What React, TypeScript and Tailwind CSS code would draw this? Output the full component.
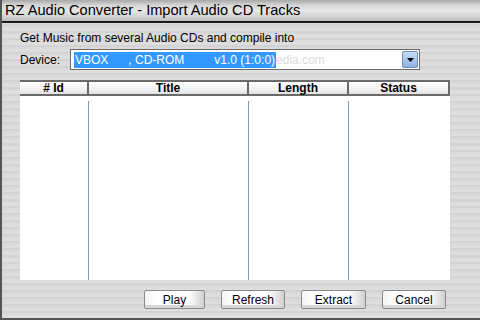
export default function App() {
  const cols = [
    { name: '# Id', w: 'w-[69px]' },
    { name: 'Title', w: 'w-[160px]' },
    { name: 'Length', w: 'w-[100px]' },
    { name: 'Status', w: 'flex-1' },
  ];
  const buttons = [
    { label: 'Play', w: 'w-[61px]' },
    { label: 'Refresh', w: 'w-[64px]' },
    { label: 'Extract', w: 'w-[65px]' },
    { label: 'Cancel', w: 'w-[64px]' },
  ];

  return (
    <div className="w-[480px] h-[320px] flex flex-col overflow-hidden border-l-2 border-b-2 border-[#555555] bg-[repeating-linear-gradient(180deg,#dedede_0px,#dedede_3px,#d3d3d3_3px,#d3d3d3_5px,#dadada_5px,#dadada_7px)] font-['Liberation_Sans',Arial,sans-serif]">
      {/* Title bar */}
      <div className="h-[23px] shrink-0 flex items-center pl-[3px] border-b-2 border-[#1a1a1a] bg-[linear-gradient(180deg,#a8a8a8_0%,#d6d6d6_25%,#e6e6e6_50%,#d2d2d2_80%,#bdbdbd_100%)]">
        <span className="text-[14.6px] leading-none text-black">RZ Audio Converter - Import Audio CD Tracks</span>
      </div>

      <div className="flex-1 flex flex-col pl-[18px] pr-[28px]">
        <div className="mt-[7px] text-[12px] leading-[16px] text-black">Get Music from several Audio CDs and compile into</div>

        <div className="mt-[3px] flex items-center">
          <span className="w-[50px] text-[12px] text-black">Device:</span>
          <div className="w-[350px] h-[21px] border border-[#6c6c6c] bg-white flex items-center pl-[3px] pr-[1px]">
            <div className="h-[16px] shrink-0 bg-[#3399ff] text-white text-[12px] leading-[16px] whitespace-pre pl-[1px] pr-[1px]">
              {'VBOX      , CD-ROM         v1.0 (1:0:0)'}
            </div>
            <span className="text-[12px] leading-[16px] text-[#dadada]">edia.com</span>
            <div className="ml-auto w-[16px] h-[17px] rounded-[2px] border border-[#6d8fc0] bg-[linear-gradient(180deg,#c9dcf6_0%,#a9c6ee_50%,#8fb1e3_100%)] flex items-center justify-center">
              <svg width="7" height="4" viewBox="0 0 7 4">
                <path d="M0 0 L7 0 L3.5 4 Z" fill="#000" />
              </svg>
            </div>
          </div>
        </div>

        {/* Table */}
        <div className="mt-[10px] w-[430px] h-[200px] bg-white flex flex-col">
          <div className="h-[16px] flex border-t-2 border-b-2 border-[#6a6a6a] bg-[linear-gradient(180deg,#ffffff_0%,#f2f2f2_60%,#e2e2e2_100%)]">
            {cols.map((c) => (
              <div
                key={c.name}
                className={`${c.w} flex items-center justify-center text-[12px] font-bold leading-none text-black border-r-2 border-[#6a6a6a]`}
              >
                {c.name}
              </div>
            ))}
          </div>
          <div className="flex-1 flex pt-[5px]">
            <div className="w-[69px] border-r border-[#7f9ab3]" />
            <div className="w-[160px] border-r border-[#7f9ab3]" />
            <div className="w-[100px] border-r border-[#7f9ab3]" />
            <div className="flex-1" />
          </div>
        </div>

        {/* Buttons */}
        <div className="mt-[10px] flex gap-[16px] pl-[124px]">
          {buttons.map((b) => (
            <div
              key={b.label}
              className={`${b.w} h-[19px] flex items-center justify-center text-[12px] text-black border border-[#8a8a8a] rounded-[2px] bg-[linear-gradient(90deg,#f4f4f4_0%,#ffffff_20%,#ffffff_75%,#d0d0d0_100%)] shadow-[inset_0_-3px_0_#d8d8d8]`}
            >
              {b.label}
            </div>
          ))}
        </div>
      </div>
    </div>
  );
}
